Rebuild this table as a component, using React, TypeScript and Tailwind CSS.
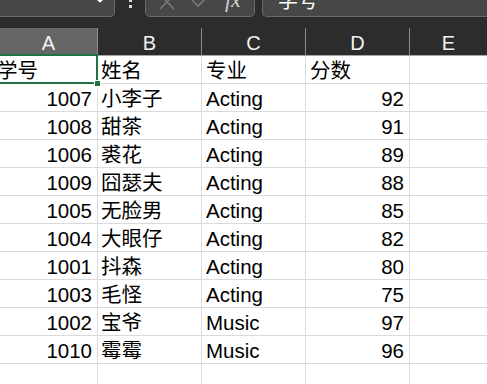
const rows: [string, string, string, string][] = [
  ["1007", "小李子", "Acting", "92"],
  ["1008", "甜茶", "Acting", "91"],
  ["1006", "裘花", "Acting", "89"],
  ["1009", "囧瑟夫", "Acting", "88"],
  ["1005", "无脸男", "Acting", "85"],
  ["1004", "大眼仔", "Acting", "82"],
  ["1001", "抖森", "Acting", "80"],
  ["1003", "毛怪", "Acting", "75"],
  ["1002", "宝爷", "Music", "97"],
  ["1010", "霉霉", "Music", "96"],
];

const font = "font-['Liberation_Sans','Noto_Sans_CJK_SC',sans-serif]";
const cell = "h-[28px] border-r border-b border-[#dadada] text-[20.5px] leading-[29px] text-black whitespace-nowrap overflow-hidden";

function Toolbar() {
  return (
    <div className="h-[28px] overflow-hidden bg-[#2c2c2c]">
      <div className="flex h-[30px] -mt-[13px] items-stretch">
        <div className="relative w-[115px] rounded-br-[5px] border border-l-0 border-[#6a6a6a] bg-[#474747]">
          <svg className="absolute left-[93px] top-[6px]" width="14" height="10" viewBox="0 0 14 10">
            <path d="M2 2l5 5 5-5" fill="none" stroke="#ffffff" strokeWidth="2.6" strokeLinecap="round" strokeLinejoin="round" />
          </svg>
        </div>
        <div className="flex w-[30px] flex-col items-center justify-end gap-[3px] pb-[9px]">
          <span className="h-[3px] w-[3px] bg-[#d8d8d8]" />
          <span className="h-[3px] w-[3px] bg-[#d8d8d8]" />
        </div>
        <div className="relative w-[110px] rounded-b-[5px] border border-[#6a6a6a] bg-[#474747]">
          <svg className="absolute left-[11px] top-[4px]" width="20" height="20" viewBox="0 0 20 20">
            <path d="M3 3l14 14M17 3L3 17" stroke="#7a7a7a" strokeWidth="1.6" fill="none" />
          </svg>
          <svg className="absolute left-[44px] top-[4px]" width="22" height="20" viewBox="0 0 22 20">
            <path d="M2 8l6 6L20 2" stroke="#7a7a7a" strokeWidth="1.6" fill="none" />
          </svg>
          <span className="absolute left-[79px] top-[-1px] font-['Liberation_Serif',serif] text-[22px] italic leading-[26px] text-[#d0d0d0]">fx</span>
        </div>
        <div className="ml-[7px] flex-1 rounded-bl-[5px] border border-r-0 border-[#6a6a6a] bg-[#474747] pl-[15px]">
          <span className="text-[20px] leading-[26px] text-white">学号</span>
        </div>
      </div>
    </div>
  );
}

export default function App() {
  const head = ["A", "B", "C", "D", "E"];
  return (
    <div className={`h-[384px] w-[487px] overflow-hidden bg-white ${font}`}>
      <Toolbar />
      <div className="grid grid-cols-[98px_104px_104px_104px_1fr]">
        {head.map((h, i) => (
          <div
            key={h}
            className={`flex h-[28px] items-center justify-center border-b border-[#a6a6a6] text-[20px] text-[#f2f2f2] ${
              i === 0 ? "bg-[#666666]" : "bg-[#2c2c2c]"
            } ${i < 4 ? "border-r border-r-[#8a8a8a]" : ""}`}
          >
            <span className="pt-[2px]">{h}</span>
          </div>
        ))}

        <div className={`${cell} relative overflow-visible pl-0`}>
          <span className="-ml-[3px]">学号</span>
          <div className="absolute -top-[2px] left-0 -right-[1px] -bottom-[1px] border-2 border-l-0 border-[#217346]" />
          <div className="absolute -right-[4px] -bottom-[4px] h-[7px] w-[7px] border border-white bg-[#217346]" />
        </div>
        <div className={`${cell} pl-[3px]`}>姓名</div>
        <div className={`${cell} pl-[4px]`}>专业</div>
        <div className={`${cell} pl-[4px]`}>分数</div>
        <div className={`${cell} border-r-0`} />

        {rows.map((r) => (
          <div key={r[0]} className="contents">
            <div className={`${cell} pr-[5px] text-right`}>{r[0]}</div>
            <div className={`${cell} pl-[3px]`}>{r[1]}</div>
            <div className={`${cell} pl-[4px]`}>{r[2]}</div>
            <div className={`${cell} pr-[5px] text-right`}>{r[3]}</div>
            <div className={`${cell} border-r-0`} />
          </div>
        ))}

        {[0, 1, 2, 3, 4].map((i) => (
          <div key={i} className={`${cell} ${i === 4 ? "border-r-0" : ""}`} />
        ))}
      </div>
    </div>
  );
}
